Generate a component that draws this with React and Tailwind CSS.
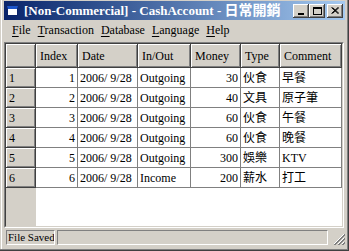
import React from "react";

const font = { fontFamily: '"Liberation Serif", "Noto Sans CJK TC", serif' };

const cols = [
  { key: "index", label: "Index", w: "w-[42px]", right: true },
  { key: "date", label: "Date", w: "w-[60px]" },
  { key: "io", label: "In/Out", w: "w-[53px]" },
  { key: "money", label: "Money", w: "w-[50px]", right: true },
  { key: "type", label: "Type", w: "w-[39px]" },
  { key: "comment", label: "Comment", w: "w-[62px]" },
];

const rows = [
  { index: 1, date: "2006/ 9/28", io: "Outgoing", money: 30, type: "伙食", comment: "早餐" },
  { index: 2, date: "2006/ 9/28", io: "Outgoing", money: 40, type: "文具", comment: "原子筆" },
  { index: 3, date: "2006/ 9/28", io: "Outgoing", money: 60, type: "伙食", comment: "午餐" },
  { index: 4, date: "2006/ 9/28", io: "Outgoing", money: 60, type: "伙食", comment: "晚餐" },
  { index: 5, date: "2006/ 9/28", io: "Outgoing", money: 300, type: "娛樂", comment: "KTV" },
  { index: 6, date: "2006/ 9/28", io: "Income", money: 200, type: "薪水", comment: "打工" },
];

const raised =
  "bg-[#d4d0c8] shadow-[inset_1px_1px_0_#fff,inset_-1px_-1px_0_#808080] border-r border-b border-[#404040]";

function CapButton({ children }) {
  return (
    <div className="w-[16px] h-[14px] bg-[#d4d0c8] flex items-center justify-center shadow-[inset_-1px_-1px_0_#404040,inset_1px_1px_0_#fff,inset_-2px_-2px_0_#808080]">
      {children}
    </div>
  );
}

function Menu({ first, rest }) {
  return (
    <span>
      <span className="underline underline-offset-2">{first}</span>
      {rest}
    </span>
  );
}

export default function App() {
  return (
    <div
      className="w-[349px] h-[251px] bg-[#d4d0c8] flex flex-col pt-px px-[4px] text-[12px] text-black overflow-hidden shadow-[inset_-1px_-1px_0_#404040,inset_-2px_-2px_0_#808080,inset_1px_0_0_#d4d0c8,inset_2px_0_0_#fff]"
      style={font}
    >
      {/* title bar */}
      <div className="h-[19px] flex items-center bg-gradient-to-r from-[#0a246a] to-[#a6caf0] pl-[3px] pr-[2px]">
        <div className="w-[11px] h-[10px] bg-white border border-[#0a246a] border-t-[3px] border-t-[#1c54c8] mr-[6px]" />
        <div className="text-white font-bold text-[13px] leading-none whitespace-nowrap flex-1">
          [Non-Commercial] - CashAccount - <span className="text-[14px]">日常開銷</span>
        </div>
        <div className="flex items-center">
          <CapButton>
            <div className="w-[6px] h-[2px] bg-black mt-[6px] -ml-[1px]" />
          </CapButton>
          <CapButton>
            <div className="w-[9px] h-[8px] border border-black border-t-2" />
          </CapButton>
          <div className="w-[2px]" />
          <CapButton>
            <svg width="8" height="7" viewBox="0 0 8 7">
              <path d="M0.5 0.5 L7 6.5 M1.5 0.5 L8 6.5 M7 0.5 L0.5 6.5 M8 0.5 L1.5 6.5" stroke="#000" strokeWidth="1" />
            </svg>
          </CapButton>
        </div>
      </div>

      {/* menu bar */}
      <div className="h-[20px] flex items-center gap-[7px] pl-[8px] leading-none">
        <Menu first="F" rest="ile" />
        <Menu first="T" rest="ransaction" />
        <Menu first="D" rest="atabase" />
        <Menu first="L" rest="anguage" />
        <Menu first="H" rest="elp" />
      </div>

      {/* grid */}
      <div className="mt-[2px] mr-px h-[186px] border-t border-l border-[#808080] border-r border-r-white border-b border-b-white">
        <div className="h-full w-full border-t border-l border-[#404040] border-r border-r-[#d4d0c8] border-b border-b-[#d4d0c8] bg-white flex flex-col overflow-hidden">
          <div className="flex h-[24px]">
            <div className={`w-[30px] ${raised}`} />
            {cols.map((c) => (
              <div key={c.key} className={`${c.w} ${raised} flex items-center pl-[4px] leading-none`}>
                {c.label}
              </div>
            ))}
          </div>
          {rows.map((r) => (
            <div key={r.index} className="flex h-[20px]">
              <div className={`w-[30px] ${raised} flex items-center pl-[3px] leading-none`}>{r.index}</div>
              {cols.map((c) => (
                <div
                  key={c.key}
                  className={`${c.w} border-r border-b border-[#808080] flex items-center leading-none whitespace-nowrap overflow-hidden ${
                    c.right ? "justify-end pr-[2px]" : "pl-[2px]"
                  }`}
                >
                  {r[c.key]}
                </div>
              ))}
            </div>
          ))}
          <div className="flex-1 flex">
            <div className="w-[30px] bg-[#d4d0c8]" />
          </div>
        </div>
      </div>

      {/* status bar */}
      <div className="h-[19px] flex items-center gap-[2px] pl-[2px]">
        <div className="w-[49px] h-[15px] border border-[#808080] border-r-white border-b-white flex items-center leading-none whitespace-nowrap overflow-hidden text-[11px] pl-px">
          File Saved
        </div>
        <div className="w-[271px] h-[15px] border border-[#808080] border-r-white border-b-white" />
        <div className="flex-1 self-end h-[15px] flex justify-end items-end pb-[2px]">
          <svg width="12" height="12" viewBox="0 0 12 12">
            <path d="M11 1 L1 11 M11 5 L5 11 M11 9 L9 11" stroke="#fff" strokeWidth="1" />
            <path d="M12 1 L1 12 M12 2 L2 12 M12 5 L5 12 M12 6 L6 12 M12 9 L9 12 M12 10 L10 12" stroke="#808080" strokeWidth="1" />
          </svg>
        </div>
      </div>
    </div>
  );
}
